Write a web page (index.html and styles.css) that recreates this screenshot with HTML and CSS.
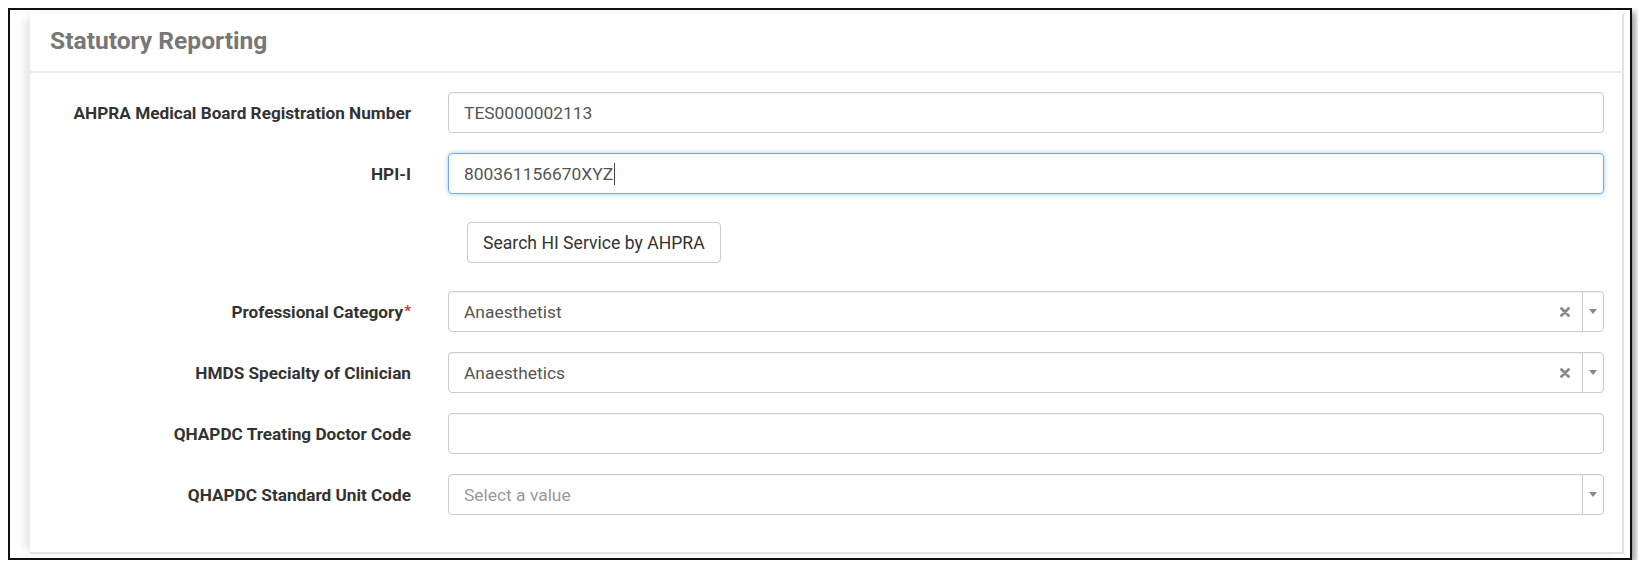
FILE: index.html
```html
<!DOCTYPE html>
<html lang="en">
<head>
<meta charset="utf-8">
<title>Statutory Reporting</title>
<link rel="stylesheet" href="styles.css">
</head>
<body>
<div class="frame">
<div class="panel">
	<div class="panel-heading">
		<h2>Statutory Reporting</h2>
	</div>

	<!-- form rows: label on the left, control on the right -->
	<div class="panel-body">
		<div class="row">
			<label>AHPRA Medical Board Registration Number</label>
			<div class="field">TES0000002113</div>
		</div>
		<div class="row">
			<label>HPI-I</label>
			<div class="field focus">800361156670XYZ<span class="caret"></span></div>
		</div>
		<div class="row">
			<span></span>
			<div><button type="button" class="btn">Search HI Service by AHPRA</button></div>
		</div>
		<div class="row">
			<label>Professional Category<span class="req">*</span></label>
			<div class="field select">
				<span class="value">Anaesthetist</span>
				<span class="clear"><svg width="10" height="10" viewBox="0 0 10 10"><path d="M1.5 1.5L8.5 8.5M8.5 1.5L1.5 8.5" stroke="#888" stroke-width="2.8" stroke-linecap="round"/></svg></span>
				<span class="arrow"><svg width="8" height="5" viewBox="0 0 8 5"><path d="M0 0H8L4 5Z" fill="#888"/></svg></span>
			</div>
		</div>
		<div class="row">
			<label>HMDS Specialty of Clinician</label>
			<div class="field select">
				<span class="value">Anaesthetics</span>
				<span class="clear"><svg width="10" height="10" viewBox="0 0 10 10"><path d="M1.5 1.5L8.5 8.5M8.5 1.5L1.5 8.5" stroke="#888" stroke-width="2.8" stroke-linecap="round"/></svg></span>
				<span class="arrow"><svg width="8" height="5" viewBox="0 0 8 5"><path d="M0 0H8L4 5Z" fill="#888"/></svg></span>
			</div>
		</div>
		<div class="row">
			<label>QHAPDC Treating Doctor Code</label>
			<div class="field"></div>
		</div>
		<div class="row">
			<label>QHAPDC Standard Unit Code</label>
			<div class="field select">
				<span class="value placeholder">Select a value</span>
				<span class="arrow"><svg width="8" height="5" viewBox="0 0 8 5"><path d="M0 0H8L4 5Z" fill="#888"/></svg></span>
			</div>
		</div>
	</div>
</div>
</div>
</body>
</html>
```

FILE: styles.css
```css
body
{
	margin:8px;
	background:#fff;
	font-family:Roboto, "Liberation Sans", sans-serif;
}
.frame
{
	box-sizing:border-box;
	width:1624px;
	height:552px;
	border:2px solid #111;
	padding:4px 6px 4px 20px;
	background:#fff;
	box-shadow:3px 4px 7px rgba(0,0,0,0.45);
}
.panel
{
	height:540px;
	background:#fff;
	border-right:2px solid #e2e2e2;
	border-bottom:2px solid #e2e2e2;
	box-sizing:border-box;
	box-shadow:-7px 0 10px -3px rgba(0,0,0,0.12);
}
.panel-heading
{
	padding:13px 18px 16px 20px;
	border-bottom:2px solid #ececec;
}
.panel-heading h2
{
	margin:0;
	font-size:24.6px;
	line-height:28px;
	font-weight:bold;
	color:#777;
}
.panel-body
{
	padding:19px 18px 0 0;
}
.row
{
	display:grid;
	grid-template-columns:381px 1fr;
	column-gap:37px;
	align-items:center;
	margin-bottom:20px;
}
.row label
{
	text-align:right;
	font-size:17.2px;
	font-weight:bold;
	color:#333;
}
.req
{
	color:#e8312f;
	font-weight:bold;
	font-size:15px;
	margin-left:1px;
	position:relative;
	top:-2px;
}
.field
{
	box-sizing:border-box;
	height:41px;
	border:1px solid #ccc;
	border-radius:4px;
	padding:0 15px;
	display:flex;
	align-items:center;
	font-size:17.4px;
	color:#555;
	box-shadow:inset 0 1px 1px rgba(0,0,0,0.05);
}
.field.focus
{
	border-color:#66afe9;
	box-shadow:inset 0 1px 1px rgba(0,0,0,0.05), 0 0 5px rgba(102,175,233,0.6);
}
.caret
{
	display:inline-block;
	width:1px;
	height:22px;
	background:#444;
	margin-left:1px;
}
.field.select
{
	padding-right:0;
}
.select .value
{
	flex:1;
}
.select .placeholder
{
	color:#999;
}
.select .clear
{
	width:10px;
	height:10px;
	display:flex;
	margin-right:12px;
}
.select .arrow
{
	width:20px;
	height:100%;
	border-left:1px solid #ccc;
	display:flex;
	align-items:center;
	justify-content:center;
}
.btn
{
	margin:8px 0 8px 19px;
	height:41px;
	padding:0 15px;
	font-family:Roboto, "Liberation Sans", sans-serif;
	font-size:17.6px;
	color:#333;
	background:#fff;
	border:1px solid #ccc;
	border-radius:4px;
	cursor:pointer;
}
```
